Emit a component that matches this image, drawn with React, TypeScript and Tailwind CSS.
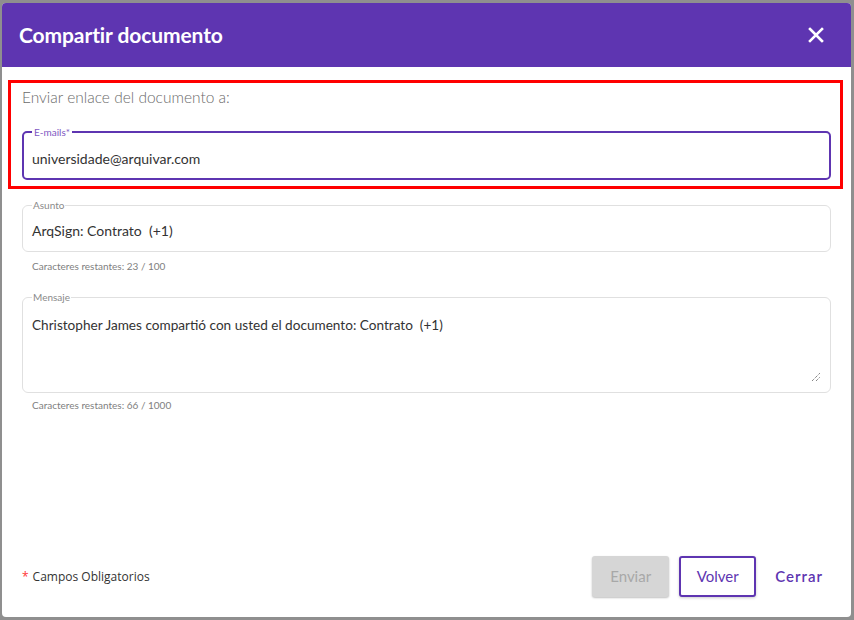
import React from "react";

export default function App() {
  const font = { fontFamily: "Lato, 'Noto Sans', sans-serif" };
  return (
    <div className="w-[854px] h-[620px] bg-[#8f8f8f] pt-[3px] pl-[2px] pr-[3px] pb-[3px] flex" style={font}>
      <div className="flex-1 bg-white rounded-[4px] overflow-hidden flex flex-col">
        <div className="h-[64px] bg-[#5e35b1] flex items-center justify-between pl-[17px] pr-[27px] shrink-0">
          <div className="text-white text-[21px] font-bold tracking-[-0.1px]">Compartir documento</div>
          <svg width="16" height="16" viewBox="0 0 16 16">
            <path d="M2 2 L14 14 M14 2 L2 14" stroke="white" strokeWidth="2.6" strokeLinecap="square" />
          </svg>
        </div>
        <div className="flex-1 flex flex-col px-[6px] pt-[13px]">
          <div className="border-[3px] border-[#ff0000] w-[835px] h-[109px] pl-[11px] pr-[9px] pt-[4px]">
            <div className="text-[15.5px] text-[#6b6b6b] font-light leading-[20px] h-[31px]">Enviar enlace del documento a:</div>
            <fieldset className="border-2 border-[#5e35b1] rounded-[5px] h-[54px] px-[8px] pb-0 mt-[8px] relative">
              <legend className="text-[10px] text-[#7e57c2] px-[2px] leading-[12px]">E-mails*</legend>
              <div className="text-[14px] text-[#333] pt-[12px] leading-[18px]">universidade@arquivar.com</div>
            </fieldset>
          </div>
          <div className="px-[14px] pt-[10px]">
            <fieldset className="border border-[#e0e0e0] rounded-[6px] h-[53px] pl-[9px] pr-[9px] relative">
              <legend className="text-[10px] text-[#8a8a8a] px-[1px] leading-[12px]">Asunto</legend>
              <div className="text-[14px] text-[#333] pt-[11px] leading-[18px]">ArqSign: Contrato&nbsp; (+1)</div>
            </fieldset>
            <div className="text-[10px] text-[#808080] pl-[10px] pt-[8px] leading-[12px]">Caracteres restantes: 23 / 100</div>
            <fieldset className="mt-[19px] border border-[#e0e0e0] rounded-[6px] h-[102px] pl-[9px] pr-[9px] relative">
              <legend className="text-[10px] text-[#8a8a8a] px-[1px] leading-[12px]">Mensaje</legend>
              <div className="text-[13.6px] text-[#333] pt-[13px] leading-[18px]">Christopher James compartió con usted el documento: Contrato&nbsp; (+1)</div>
              <svg className="absolute right-[9px] bottom-[10px]" width="10" height="10" viewBox="0 0 10 10">
                <path d="M1 9 L9 1 M5 9 L9 5" stroke="#555" strokeWidth="1" strokeDasharray="1 1" />
              </svg>
            </fieldset>
            <div className="text-[10px] text-[#808080] pl-[10px] pt-[6px] leading-[12px]">Caracteres restantes: 66 / 1000</div>
          </div>
          <div className="flex-1" />
          <div className="flex items-center justify-between pl-[14px] pr-[22px] pb-[20px]">
            <div className="text-[12px] text-[#333]" style={{ fontFamily: "'Open Sans', sans-serif" }}>
              <span className="text-[#ff3333] mr-[4px]">*</span>Campos Obligatorios
            </div>
            <div className="flex items-center">
              <button className="w-[77px] h-[41px] rounded-[3px] bg-[#d6d6d6] text-[#a8a8a8] text-[15px] shadow-[0_1px_2px_rgba(0,0,0,0.25)]">Enviar</button>
              <button className="ml-[10px] w-[77px] h-[41px] rounded-[3px] border-2 border-[#5e35b1] text-[#5e35b1] text-[15px] bg-white shadow-[0_1px_3px_rgba(0,0,0,0.2)]">Volver</button>
              <button className="ml-[19px] text-[#5e35b1] text-[15px] font-semibold tracking-[1px]">Cerrar</button>
            </div>
          </div>
        </div>
      </div>
    </div>
  );
}
